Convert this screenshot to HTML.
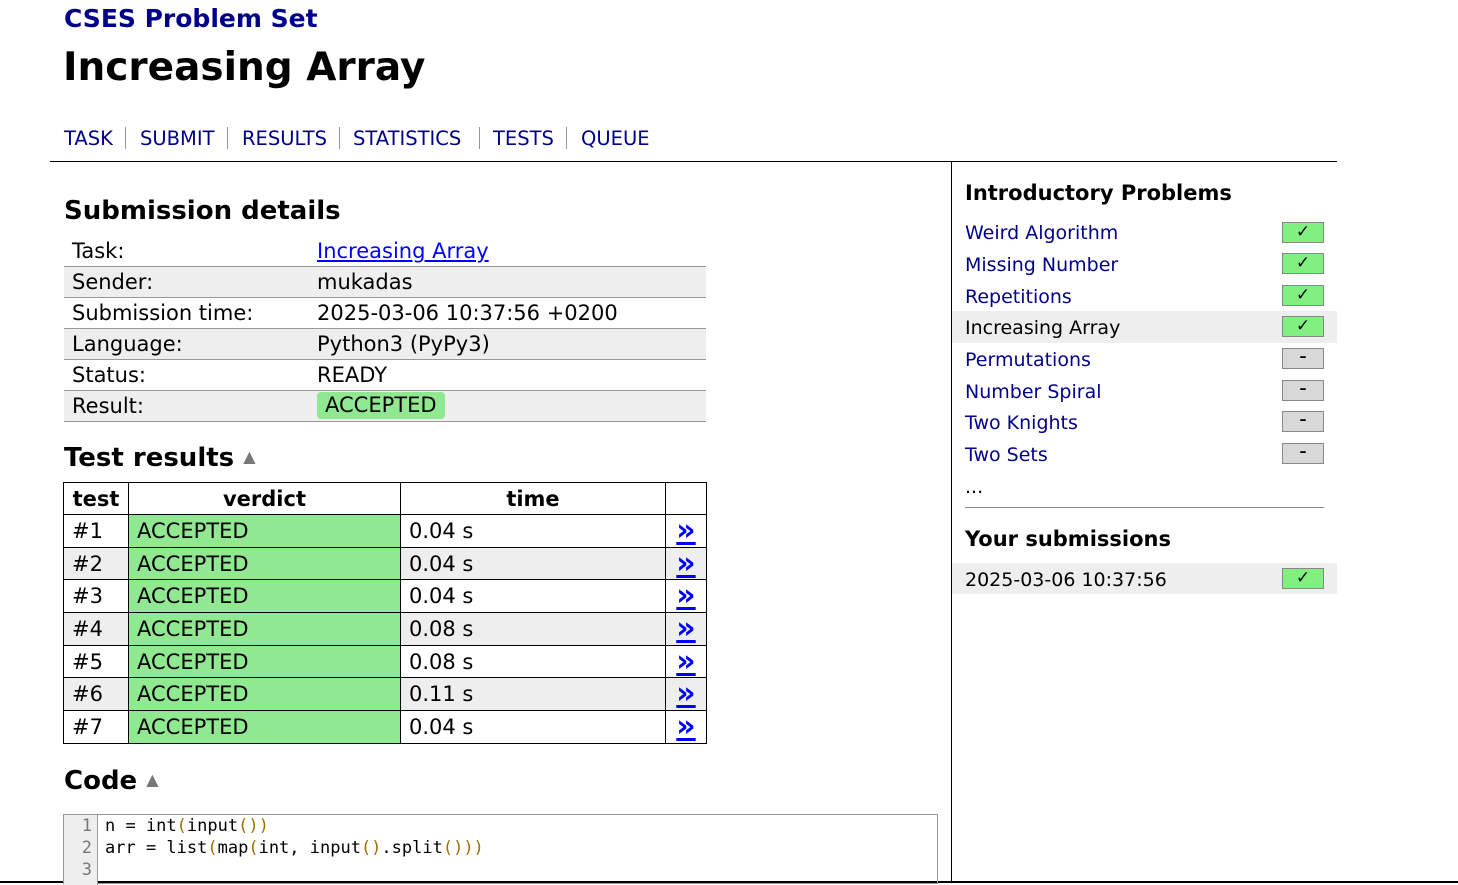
<!DOCTYPE html>
<html><head><meta charset="utf-8"><style>
*{margin:0;padding:0;box-sizing:border-box}
body{width:1458px;height:883px;overflow:hidden;background:#fff;font-family:"DejaVu Sans","Liberation Sans",sans-serif;color:#000;position:relative}
.a{position:absolute;white-space:nowrap}
.nv{color:#00008b}
.nav span{color:#00008b}
.sep{position:absolute;top:127px;width:1px;height:22px;background:#999}
.dt{position:absolute;left:64px;width:642px}
.dt div{height:31px;border-bottom:1px solid #999;font-size:21px;line-height:30px;position:relative}
.dt .g{background:#eee}
.dt b{font-weight:normal;position:absolute;left:8px}
.dt i{font-style:normal;position:absolute;left:253px}
table{border-collapse:collapse;position:absolute;left:63px;top:482px;font-size:21px}
td,th{border:1px solid #000;height:32.7px;padding:0 8px}
th{font-weight:bold;height:32px}
.acc{background:#90e890}
.gr td{background:#eee}
.gr td.acc{background:#90e890}
.arr{color:#00f;font-weight:bold;text-decoration:underline;text-align:center;font-size:30px;line-height:20px}
.sb{position:absolute;left:965px;font-size:19px;color:#00008b;white-space:nowrap}
.box{position:absolute;left:1282px;width:42px;height:21px;border:1px solid #888;font-size:17px;text-align:center;line-height:19px}
.ok{background:#80f080}
.no{background:#d8d8d8;font-weight:bold;font-size:14px;line-height:17px}
</style></head><body>
<div class="a nv" style="left:64px;top:4px;font-size:25px;font-weight:bold">CSES Problem Set</div>
<div class="a" style="left:63px;top:45px;font-size:39px;font-weight:bold">Increasing Array</div>
<div class="nav" style="font-size:19.5px">
<span class="a" style="left:64px;top:127px">TASK</span>
<span class="a" style="left:140px;top:127px">SUBMIT</span>
<span class="a" style="left:242px;top:127px">RESULTS</span>
<span class="a" style="left:353px;top:127px">STATISTICS</span>
<span class="a" style="left:493px;top:127px">TESTS</span>
<span class="a" style="left:581px;top:127px">QUEUE</span>
</div>
<div class="sep" style="left:125px"></div><div class="sep" style="left:227px"></div><div class="sep" style="left:339px"></div><div class="sep" style="left:479px"></div><div class="sep" style="left:566px"></div>
<div class="a" style="left:50px;top:161px;width:1287px;height:1px;background:#000"></div>
<div class="a" style="left:951px;top:161px;width:1px;height:722px;background:#000"></div>
<div class="a" style="left:0;top:881px;width:1458px;height:2px;background:#000"></div>

<div class="a" style="left:64px;top:196px;font-size:26px;font-weight:bold">Submission details</div>
<div class="dt" style="top:236px">
<div><b>Task:</b><i style="color:#00f;text-decoration:underline">Increasing Array</i></div>
<div class="g"><b>Sender:</b><i>mukadas</i></div>
<div><b>Submission time:</b><i>2025-03-06 10:37:56 +0200</i></div>
<div class="g"><b>Language:</b><i>Python3 (PyPy3)</i></div>
<div><b>Status:</b><i>READY</i></div>
<div class="g"><b>Result:</b><i style="background:#90e890;border-radius:4px;padding:0 8px;top:1px;line-height:27px">ACCEPTED</i></div>
</div>

<div class="a" style="left:64px;top:443px;font-size:26px;font-weight:bold">Test results <span style="color:#777;font-size:16px;vertical-align:4px">▲</span></div>
<table>
<tr><th style="width:65px;padding:0 6px">test</th><th style="width:272px">verdict</th><th style="width:265px">time</th><th style="width:41px"></th></tr>
<tr><td>#1</td><td class="acc">ACCEPTED</td><td>0.04 s</td><td class="arr">»</td></tr>
<tr class="gr"><td>#2</td><td class="acc">ACCEPTED</td><td>0.04 s</td><td class="arr">»</td></tr>
<tr><td>#3</td><td class="acc">ACCEPTED</td><td>0.04 s</td><td class="arr">»</td></tr>
<tr class="gr"><td>#4</td><td class="acc">ACCEPTED</td><td>0.08 s</td><td class="arr">»</td></tr>
<tr><td>#5</td><td class="acc">ACCEPTED</td><td>0.08 s</td><td class="arr">»</td></tr>
<tr class="gr"><td>#6</td><td class="acc">ACCEPTED</td><td>0.11 s</td><td class="arr">»</td></tr>
<tr><td>#7</td><td class="acc">ACCEPTED</td><td>0.04 s</td><td class="arr">»</td></tr>
</table>

<div class="a" style="left:64px;top:766px;font-size:26px;font-weight:bold">Code <span style="color:#777;font-size:16px;vertical-align:4px">▲</span></div>
<div class="a" style="left:63px;top:814px;width:875px;height:70px;border:1px solid #999;font-family:'DejaVu Sans Mono','Liberation Mono',monospace;font-size:17px;line-height:22px">
<div style="position:absolute;left:0;top:0;width:34px;height:70px;background:#eee;border-right:1px solid #999;color:#777;text-align:right;padding-right:5px">1<br>2<br>3</div>
<div style="position:absolute;left:41px;top:0">n = int<span style="color:#a07000">(</span>input<span style="color:#a07000">())</span><br>arr = list<span style="color:#a07000">(</span>map<span style="color:#a07000">(</span>int, input<span style="color:#a07000">()</span>.split<span style="color:#a07000">()))</span></div>
</div>

<div class="a" style="left:965px;top:181px;font-size:21px;font-weight:bold">Introductory Problems</div>
<div class="a" style="left:952px;top:311px;width:385px;height:32px;background:#eee"></div>
<div class="sb" style="top:222px">Weird Algorithm</div>
<div class="sb" style="top:254px">Missing Number</div>
<div class="sb" style="top:286px">Repetitions</div>
<div class="sb" style="top:317px;color:#000">Increasing Array</div>
<div class="sb" style="top:349px">Permutations</div>
<div class="sb" style="top:381px">Number Spiral</div>
<div class="sb" style="top:412px">Two Knights</div>
<div class="sb" style="top:444px">Two Sets</div>
<div class="sb" style="top:476px;color:#000">...</div>
<div class="box ok" style="top:222px">✓</div>
<div class="box ok" style="top:253px">✓</div>
<div class="box ok" style="top:285px">✓</div>
<div class="box ok" style="top:316px">✓</div>
<div class="box no" style="top:348px">–</div>
<div class="box no" style="top:380px">–</div>
<div class="box no" style="top:411px">–</div>
<div class="box no" style="top:443px">–</div>
<div class="a" style="left:965px;top:507px;width:359px;height:1px;background:#888"></div>
<div class="a" style="left:965px;top:527px;font-size:21px;font-weight:bold">Your submissions</div>
<div class="a" style="left:952px;top:563px;width:385px;height:31px;background:#eee"></div>
<div class="sb" style="top:569px;color:#000">2025-03-06 10:37:56</div>
<div class="box ok" style="top:568px">✓</div>
</body></html>
